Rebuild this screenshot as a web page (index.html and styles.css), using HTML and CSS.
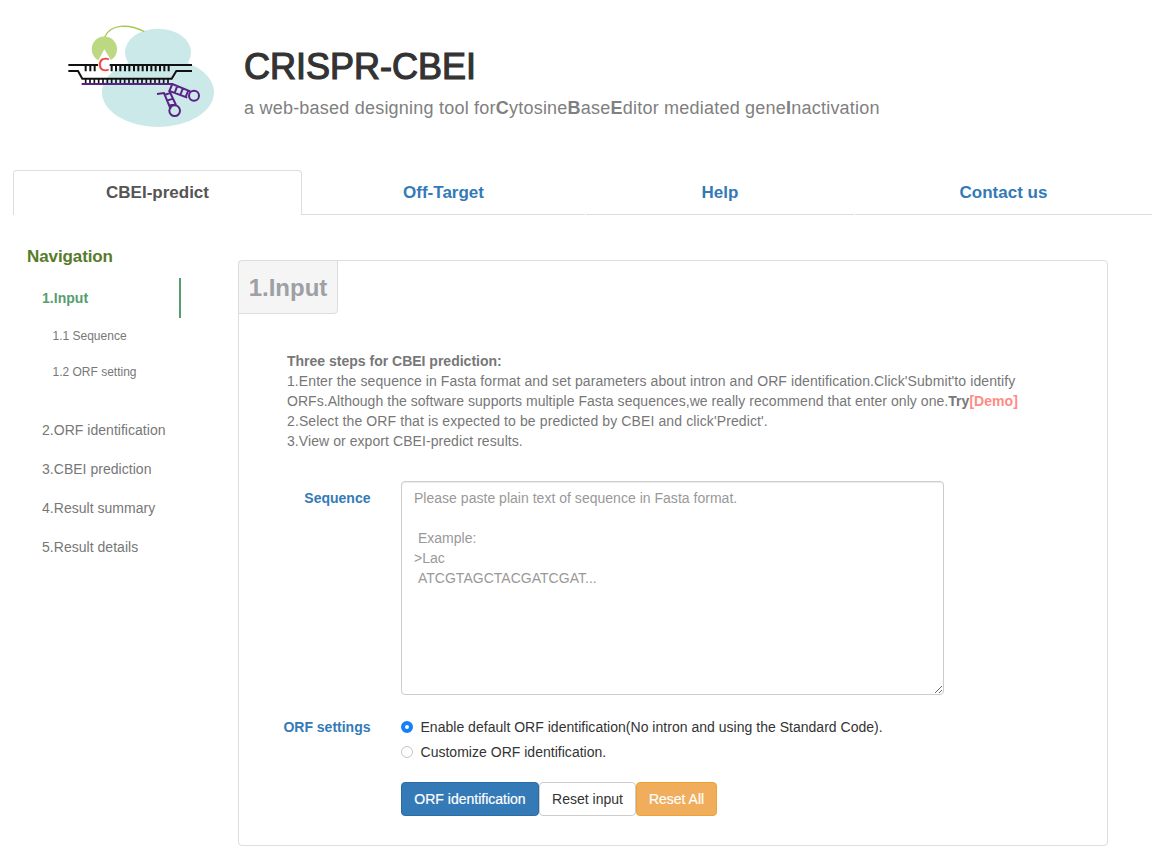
FILE: index.html
```html
<!DOCTYPE html>
<html lang="en">
<head>
<meta charset="utf-8">
<title>CRISPR-CBEI</title>
<link rel="stylesheet" href="styles.css">
</head>
<body>
<header class="header">
  <svg class="logo" viewBox="0 0 495 360" aria-hidden="true">
    <g fill="#cbe9e9"><ellipse cx="294" cy="112" rx="99" ry="71"/><ellipse cx="294" cy="232" rx="168" ry="104"/></g>
    <path d="M134 66C151 28 204 25 253 50" fill="none" stroke="#a2ca50" stroke-width="4"/>
    <path d="M133 103L115 136A38 38 0 1 1 153 135Z" fill="#bdd883"/>
    <g fill="none" stroke="#111" stroke-width="6">
      <path d="M25 150H114M149 150H396M25 168H54L67 191H335L349 168H396"/>
      <path d="M77 150V169M91 150V169M104 150V169M155 150V169M168 150V169M181 150V169M195 150V169M208 150V169M222 150V169M235 150V169M248 150V169M261 150V169M274 150V169M287 150V169M300 150V169M313 150V169M326 150V169"/>
      <path d="M77 191V207M90 191V207M103 191V207M116 191V207M129 191V207M142 191V207M155 191V207M168 191V207M181 191V207M194 191V207M207 191V207M220 191V207M233 191V207M246 191V207M259 191V207M272 191V207M285 191V207M298 191V207M311 191V207M324 191V207" stroke-width="5"/>
    </g>
    <g fill="none" stroke="#5b2187" stroke-width="6">
      <path d="M65 207H337L391 229M291 237L312 234L332 282M337 207L328 228L382 248M328 228L348 270M352 212L344 234M369 219L361 240M385 226L377 246M314 240L333 233M321 257L341 250M328 272L347 266"/>
      <circle cx="402" cy="242" r="15"/><circle cx="344" cy="287" r="16"/>
    </g>
    <text class="logo-letter" x="114" y="169" textLength="35" lengthAdjust="spacingAndGlyphs">C</text>
  </svg>
  <div class="heading">
    <h1>CRISPR-CBEI</h1>
    <p>a web-based designing tool for<b>C</b>ytosine<b>B</b>ase<b>E</b>ditor mediated gene<b>I</b>nactivation</p>
  </div>
</header>
<nav class="tabs">
  <a class="tab active">CBEI-predict</a><a class="tab">Off-Target</a><a class="tab">Help</a><a class="tab">Contact us</a>
</nav>
<main class="layout">
  <aside class="sidebar">
    <h2>Navigation</h2>
    <a class="nav current">1.Input</a>
    <a class="sub first">1.1 Sequence</a>
    <a class="sub last">1.2 ORF setting</a>
    <a class="nav">2.ORF identification</a>
    <a class="nav">3.CBEI prediction</a>
    <a class="nav">4.Result summary</a>
    <a class="nav">5.Result details</a>
  </aside>
  <section class="panel">
    <h3>1.Input</h3>
    <div class="intro">
      <div><b class="lead">Three steps for CBEI prediction:</b></div>
      <div><span class="l1">1.Enter the sequence in Fasta format and set parameters about intron and ORF identification.Click'Submit'to identify</span></div>
      <div><span class="l2">ORFs.Although the software supports multiple Fasta sequences,we really recommend that enter only one.<b>Try<a class="demo">[Demo]</a></b></span></div>
      <div><span class="l3">2.Select the ORF that is expected to be predicted by CBEI and click'Predict'.</span></div>
      <div><span class="l4">3.View or export CBEI-predict results.</span></div>
    </div>
    <div class="row sequence">
      <label class="name" for="seq">Sequence</label>
      <textarea id="seq" placeholder="Please paste plain text of sequence in Fasta format.&#10;&#10; Example:&#10;&gt;Lac&#10; ATCGTAGCTACGATCGAT..."></textarea>
    </div>
    <div class="row settings">
      <span class="name">ORF settings</span>
      <div class="options">
        <label><i class="radio on"></i><span class="o1">Enable default ORF identification(No intron and using the Standard Code).</span></label>
        <label><i class="radio"></i><span class="o2">Customize ORF identification.</span></label>
      </div>
    </div>
    <div class="buttons">
      <button class="btn primary">ORF identification</button><button class="btn plain">Reset input</button><button class="btn warn">Reset All</button>
    </div>
  </section>
</main>
</body>
</html>
```
FILE: styles.css
```css
* { box-sizing: border-box; }
body { margin: 0; background: #fff; color: #333; font: 14px/20px "Liberation Sans", Arial, sans-serif; overflow: hidden; }
h1, h2, h3, p { margin: 0; }
.header { display: flex; height: 170px; padding: 15px 0 0 60px; }
.logo { width: 165px; height: 120px; flex: none; }
.logo-letter { font: 54px "Open Sans", sans-serif; fill: #ee3b35; stroke: #ee3b35; stroke-width: 1px; }
.heading { padding: 32px 0 0 19px; white-space: nowrap; }
.heading h1 { font-size: 36px; line-height: 40px; font-weight: 400; -webkit-text-stroke: 1.2px #333; letter-spacing: 0; }
.heading p { margin-top: 10px; font-size: 18px; line-height: 22px; color: #808080; letter-spacing: 0.22px; }
.tabs { display: grid; grid-template-columns: 289px 284px 269px 297px; margin-left: 13px; width: 1139px; height: 45px; }
.tab { height: 45px; padding-top: 1px; margin-right: 1px; font-size: 17px; line-height: 43px; font-weight: 700; text-align: center; color: #337ab7; border-bottom: 1px solid #ddd; letter-spacing: 0; }
.tab:last-child { margin-right: 0; }
.tab.active { margin-right: 0; color: #555; border: 1px solid #ddd; border-bottom: 0; border-radius: 4px 4px 0 0; line-height: 42px; }
.layout { display: flex; align-items: flex-start; }
.sidebar { width: 238px; flex: none; padding: 30px 0 0 27px; display: flex; flex-direction: column; color: #777; white-space: nowrap; }
.sidebar h2 { font-size: 17px; line-height: 23px; color: #567b2a; margin-bottom: 10px; letter-spacing: -0.1px; }
.nav { height: 39px; line-height: 39px; padding-left: 15px; letter-spacing: 0.03px; }
.nav.current { width: 154px; height: 40px; line-height: 40px; border-right: 2px solid #569d70; color: #569d70; font-weight: 700; }
.sub { font-size: 12px; height: 36px; line-height: 36px; padding-left: 25.5px; }
.sub.last { margin-bottom: 21px; }
.panel { width: 870px; height: 586px; margin-top: 45px; border: 1px solid #ddd; border-radius: 4px; display: flex; flex-direction: column; align-items: flex-start; }
.panel h3 { width: 100px; height: 54px; margin: -1px 0 0 -1px; border: 1px solid #ddd; border-radius: 4px 0; background: #f5f5f5; color: #9da0a4; font-size: 24px; line-height: 53px; text-align: center; }
.intro { margin: 37px 0 0 48px; color: #777; white-space: nowrap; }
.l1 { letter-spacing: 0.087px; }
.l2 { letter-spacing: 0.044px; }
.l3 { letter-spacing: 0.112px; }
.l4 { letter-spacing: 0.07px; }
.demo { color: #ff8c84; }
.row { display: flex; }
.name { width: 131.5px; margin-right: 30.5px; text-align: right; color: #337ab7; font-weight: 700; white-space: nowrap; }
.sequence { margin-top: 30px; }
.sequence .name { padding-top: 7px; }
textarea { display: block; width: 543px; height: 214px; margin: 0; padding: 6px 12px; border: 1px solid #ccc; border-radius: 4px; box-shadow: inset 0 1px 1px rgba(0,0,0,.075); font: inherit; letter-spacing: 0.02px; resize: both; }
textarea::placeholder { color: #999; opacity: 1; }
.settings { margin-top: 22px; }
.options { display: flex; flex-direction: column; gap: 5px; white-space: nowrap; letter-spacing: 0.02px; }
.options label { display: flex; align-items: center; height: 20px; }
.radio { width: 12px; height: 12px; margin-right: 7.5px; border: 1px solid #c4c4c4; border-radius: 50%; }
.radio.on { border: 4px solid #147efb; }
.buttons { display: flex; margin: 20px 0 0 162px; }
.btn { height: 34px; padding: 0; font: inherit; border: 1px solid #ccc; border-radius: 4px; background: #fff; color: #333; white-space: nowrap; }
.primary { width: 138px; background: #337ab7; border-color: #2e6da4; color: #fff; -webkit-text-stroke: 0.2px #fff; }
.plain { width: 97px; }
.warn { width: 81px; background: #f0ad5b; border-color: #eea236; color: #fff; -webkit-text-stroke: 0.2px #fff; }
```
